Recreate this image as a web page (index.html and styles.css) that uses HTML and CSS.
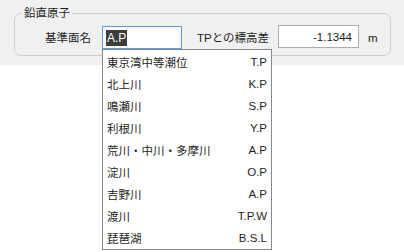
FILE: index.html
```html
<!DOCTYPE html>
<html lang="ja">
<head>
<meta charset="utf-8">
<link rel="stylesheet" href="styles.css">
</head>
<body>
<div class="panel">
  <fieldset class="group">
    <legend class="legend">鉛直原子</legend>
    <div class="row">
      <span class="label label-base">基準面名</span>
      <div class="combo">
        <div class="input input-active"><span class="sel">A.P</span></div>
        <ul class="dropdown">
          <li class="item"><span>東京湾中等潮位</span><span>T.P</span></li>
          <li class="item"><span>北上川</span><span>K.P</span></li>
          <li class="item"><span>鳴瀬川</span><span>S.P</span></li>
          <li class="item"><span>利根川</span><span>Y.P</span></li>
          <li class="item"><span>荒川・中川・多摩川</span><span>A.P</span></li>
          <li class="item"><span>淀川</span><span>O.P</span></li>
          <li class="item"><span>吉野川</span><span>A.P</span></li>
          <li class="item"><span>渡川</span><span>T.P.W</span></li>
          <li class="item"><span>琵琶湖</span><span>B.S.L</span></li>
        </ul>
      </div>
      <span class="label label-tp">TPとの標高差</span>
      <div class="input input-num">-1.1344</div>
      <span class="unit">m</span>
    </div>
  </fieldset>
</div>
</body>
</html>
```
FILE: styles.css
```css
html, body {
  margin: 0;
  padding: 0;
  background: #ffffff;
}
body {
  font-family: "Liberation Sans", "Noto Sans CJK JP", sans-serif;
  font-size: 11.5px;
  color: #1e1e1e;
  width: 404px;
  height: 252px;
  overflow: hidden;
}
.panel {
  background: #f0f0f0;
  height: 65px;
  padding-top: 5px;
  box-sizing: border-box;
}
.group {
  margin: 0 13px 0 14px;
  padding: 5px 0 6px 0;
  border: 1px solid #cfcfcf;
  border-radius: 7px;
  min-width: 0;
}
.legend {
  margin-left: 7px;
  padding: 0 2px;
  font-size: 11.5px;
  line-height: 16px;
  color: #1e1e1e;
}
.row {
  display: flex;
  align-items: center;
  height: 23px;
}
.label {
  line-height: 16px;
  white-space: nowrap;
}
.label-base {
  margin-left: 30px;
  width: 57px;
}
.combo {
  position: relative;
  width: 80px;
  height: 23px;
}
.input {
  box-sizing: border-box;
  height: 23px;
  background: #ffffff;
  border: 1px solid #abadb3;
  display: flex;
  align-items: center;
}
.input-active {
  border-color: #569de5;
  padding-left: 3px;
}
.sel {
  background: #3c3c3c;
  color: #ffffff;
  padding: 0 1px;
  line-height: 16px;
  font-size: 12px;
}
.label-tp {
  box-sizing: border-box;
  padding-left: 15px;
  width: 96px;
}
.input-num {
  width: 81px;
  justify-content: flex-end;
  padding-right: 6px;
  height: 23px;
  margin-top: -2px;
}
.unit {
  margin-left: 9px;
}
.dropdown {
  position: absolute;
  top: 23px;
  left: 0;
  width: 170px;
  box-sizing: border-box;
  margin: 0;
  padding: 0;
  list-style: none;
  background: #ffffff;
  border: 1px solid #828790;
  z-index: 2;
}
.item {
  height: 22px;
  display: flex;
  align-items: center;
  justify-content: space-between;
  padding: 0 4px 1px 4px;
  box-sizing: border-box;
  white-space: nowrap;
}
.item:first-child {
  height: 23px;
  padding-top: 1px;
}
```
